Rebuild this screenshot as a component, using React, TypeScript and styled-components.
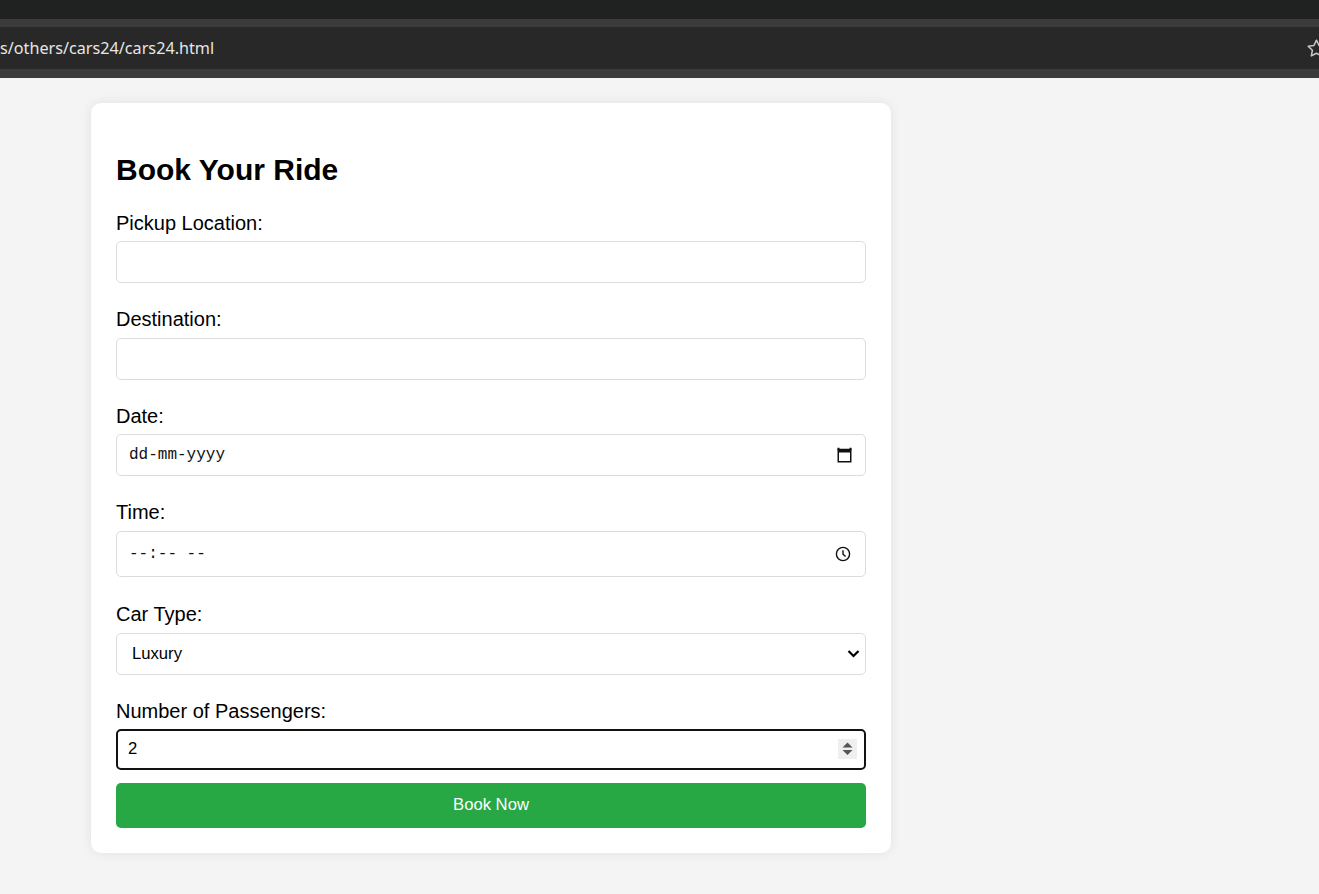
import React from "react";
import styled, { createGlobalStyle } from "styled-components";

const GlobalStyle = createGlobalStyle`
  html, body { margin: 0; padding: 0; }
  body {
    background: #f4f4f4;
    font-family: "Liberation Sans", Arial, sans-serif;
    width: 1319px;
    height: 894px;
    overflow: hidden;
  }
  * { box-sizing: border-box; }
`;

const BrowserChrome = styled.header`
  display: flex;
  flex-direction: column;
`;

const TabStrip = styled.div`
  height: 19px;
  background: #202121;
`;

const Divider = styled.div<{ $h: number }>`
  height: ${(p) => p.$h}px;
  background: #3b3b3b;
`;

const AddressBar = styled.div`
  height: 42px;
  background: #282828;
  display: flex;
  align-items: center;
  justify-content: space-between;
  overflow: hidden;
`;

const Url = styled.span`
  font-family: "Noto Sans", "Open Sans", sans-serif;
  font-size: 16.2px;
  color: #e6e6e6;
  white-space: nowrap;
`;

const Star = styled.svg`
  flex: none;
  margin-right: -8px;
`;

const Page = styled.main`
  padding: 25px 0 0 91px;
`;

const Card = styled.form`
  width: 800px;
  background: #fff;
  border-radius: 10px;
  box-shadow: 0 0 12px rgba(0, 0, 0, 0.08);
  padding: 25px;
  display: flex;
  flex-direction: column;
`;

const Title = styled.h2`
  margin: 25px 0;
  font-size: 30px;
  line-height: 34px;
  font-weight: bold;
  color: #000;
`;

const Field = styled.div<{ $mb?: number }>`
  display: flex;
  flex-direction: column;
  margin-bottom: ${(p) => (p.$mb ?? 25)}px;
`;

const Label = styled.label<{ $mb?: number }>`
  font-size: 20px;
  line-height: 23px;
  color: #000;
  margin-bottom: ${(p) => (p.$mb ?? 6.25)}px;
`;

const Control = styled.div`
  position: relative;
  display: flex;
`;

const TextInput = styled.input<{ $h: number; $mono?: boolean; $active?: boolean }>`
  width: 100%;
  height: ${(p) => p.$h}px;
  border: ${(p) => (p.$active ? "2px solid #121212" : "1px solid #dcdcdc")};
  border-radius: 5px;
  padding: 0 ${(p) => (p.$active ? 10 : 12)}px;
  background: #fff;
  color: #000;
  font-family: ${(p) =>
    p.$mono ? `"Liberation Mono", "DejaVu Sans Mono", monospace` : `"Liberation Sans", Arial, sans-serif`};
  font-size: ${(p) => (p.$mono ? 16 : 16.67)}px;
  outline: none;
  appearance: none;
  -moz-appearance: textfield;
  &::placeholder { color: #111; opacity: 1; }
  &::-webkit-inner-spin-button,
  &::-webkit-outer-spin-button { -webkit-appearance: none; margin: 0; }
`;

const Select = styled.select`
  width: 100%;
  height: 42px;
  border: 1px solid #dcdcdc;
  border-radius: 5px;
  padding: 0 30px 0 15px;
  background: #fff;
  color: #000;
  font-family: "Liberation Sans", Arial, sans-serif;
  font-size: 16.67px;
  appearance: none;
  -webkit-appearance: none;
  outline: none;
`;

const Indicator = styled.span<{ $right: number }>`
  position: absolute;
  right: ${(p) => p.$right}px;
  top: 50%;
  transform: translateY(-50%);
  display: flex;
  pointer-events: none;
`;

const Spinner = styled.span`
  position: absolute;
  right: 9px;
  top: 50%;
  transform: translateY(-50%);
  width: 19px;
  height: 20px;
  background: #efefef;
  display: flex;
  align-items: center;
  justify-content: center;
  pointer-events: none;
`;

const SubmitButton = styled.button`
  width: 100%;
  height: 45px;
  border: none;
  border-radius: 5px;
  background: #28a745;
  color: #fff;
  font-family: "Liberation Sans", Arial, sans-serif;
  font-size: 16.67px;
  cursor: pointer;
`;

const CalendarIcon = () => (
  <svg width="15" height="16" viewBox="0 0 15 16">
    <rect x="1.25" y="2.5" width="12.5" height="12.25" fill="none" stroke="#111" strokeWidth="1.5" />
    <rect x="1.25" y="2.5" width="12.5" height="3" fill="#111" />
    <rect x="0.5" y="0.75" width="2" height="2.5" fill="#111" />
    <rect x="12.5" y="0.75" width="2" height="2.5" fill="#111" />
  </svg>
);

const ClockIcon = () => (
  <svg width="16" height="16" viewBox="0 0 16 16">
    <circle cx="8" cy="8" r="6.6" fill="none" stroke="#111" strokeWidth="1.4" />
    <path d="M8 4.3V8.2L10.6 10.6" fill="none" stroke="#111" strokeWidth="1.4" />
  </svg>
);

const ChevronIcon = () => (
  <svg width="13" height="9" viewBox="0 0 13 9">
    <polyline points="1.5,1.5 6.5,6.5 11.5,1.5" fill="none" stroke="#000" strokeWidth="2.2" />
  </svg>
);

const SpinIcon = () => (
  <svg width="11" height="14" viewBox="0 0 11 14">
    <polygon points="5.5,0.5 0.5,5.5 10.5,5.5" fill="#555" />
    <polygon points="0.5,8 10.5,8 5.5,13" fill="#555" />
  </svg>
);

export default function App() {
  return (
    <>
      <GlobalStyle />
      <BrowserChrome>
        <TabStrip />
        <Divider $h={8} />
        <AddressBar>
          <Url>s/others/cars24/cars24.html</Url>
          <Star width="21" height="21" viewBox="0 0 24 24">
            <path
              d="M12 2.5l2.9 6 6.6.9-4.8 4.6 1.2 6.5L12 17.4l-5.9 3.1 1.2-6.5-4.8-4.6 6.6-.9z"
              fill="none"
              stroke="#c8c8c8"
              strokeWidth="1.7"
              strokeLinejoin="round"
            />
          </Star>
        </AddressBar>
        <Divider $h={9} />
      </BrowserChrome>
      <Page>
        <Card onSubmit={(e) => e.preventDefault()}>
          <Title>Book Your Ride</Title>
          <Field>
            <Label htmlFor="pickup">Pickup Location:</Label>
            <TextInput id="pickup" type="text" $h={42} />
          </Field>
          <Field>
            <Label htmlFor="destination">Destination:</Label>
            <TextInput id="destination" type="text" $h={42} />
          </Field>
          <Field>
            <Label htmlFor="date">Date:</Label>
            <Control>
              <TextInput id="date" type="text" placeholder="dd-mm-yyyy" $h={42.5} $mono />
              <Indicator $right={14}>
                <CalendarIcon />
              </Indicator>
            </Control>
          </Field>
          <Field $mb={26}>
            <Label htmlFor="time">Time:</Label>
            <Control>
              <TextInput id="time" type="text" placeholder="--:-- --" $h={46} $mono />
              <Indicator $right={15}>
                <ClockIcon />
              </Indicator>
            </Control>
          </Field>
          <Field>
            <Label htmlFor="car" $mb={7}>Car Type:</Label>
            <Control>
              <Select id="car" defaultValue="Luxury">
                <option>Economy</option>
                <option>Sedan</option>
                <option>SUV</option>
                <option>Luxury</option>
              </Select>
              <Indicator $right={6}>
                <ChevronIcon />
              </Indicator>
            </Control>
          </Field>
          <Field $mb={13}>
            <Label htmlFor="passengers">Number of Passengers:</Label>
            <Control>
              <TextInput id="passengers" type="number" defaultValue={2} $h={41} $active autoFocus />
              <Spinner>
                <SpinIcon />
              </Spinner>
            </Control>
          </Field>
          <SubmitButton type="submit">Book Now</SubmitButton>
        </Card>
      </Page>
    </>
  );
}
